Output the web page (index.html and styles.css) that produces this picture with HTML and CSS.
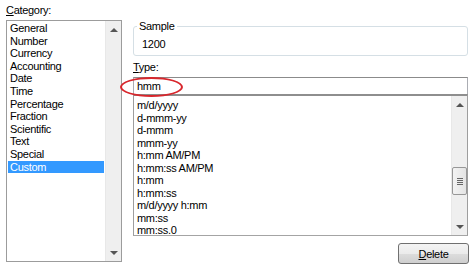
FILE: index.html
```html
<!DOCTYPE html>
<html>

<head>
    <meta name="viewport" content="width=device-width, initial-scale=1.0">
    <title>Format Cells - Custom</title>
    <link rel="stylesheet" href="styles.css">
</head>

<body>
    <div class="dialog">
        <div class="left">
            <div class="caption"><u>C</u>ategory:</div>
            <div class="listbox cat">
                <ul class="items">
                    <li>General</li>
                    <li>Number</li>
                    <li>Currency</li>
                    <li>Accounting</li>
                    <li>Date</li>
                    <li>Time</li>
                    <li>Percentage</li>
                    <li>Fraction</li>
                    <li>Scientific</li>
                    <li>Text</li>
                    <li>Special</li>
                    <li class="sel">Custom</li>
                </ul>
                <div class="vscroll">
                    <div class="arrow"><span class="up"></span></div>
                    <div class="track"></div>
                    <div class="arrow"><span class="down"></span></div>
                </div>
            </div>
        </div>

        <div class="right">
            <fieldset class="sample">
                <legend>Sample</legend>
                <div class="value">1200</div>
            </fieldset>

            <div class="caption type-label"><u>T</u>ype:</div>
            <div class="type-input">
                hmm
                <span class="circle"></span>
            </div>

            <div class="listbox types">
                <ul class="items">
                    <li>m/d/yyyy</li>
                    <li>d-mmm-yy</li>
                    <li>d-mmm</li>
                    <li>mmm-yy</li>
                    <li>h:mm AM/PM</li>
                    <li>h:mm:ss AM/PM</li>
                    <li>h:mm</li>
                    <li>h:mm:ss</li>
                    <li>m/d/yyyy h:mm</li>
                    <li>mm:ss</li>
                    <li>mm:ss.0</li>
                </ul>
                <div class="vscroll">
                    <div class="arrow"><span class="up"></span></div>
                    <div class="track">
                        <div class="thumb"><span></span><span></span><span></span><span></span></div>
                    </div>
                    <div class="arrow"><span class="down"></span></div>
                </div>
            </div>

            <div class="buttons">
                <button class="btn"><u>D</u>elete</button>
            </div>
        </div>
    </div>
</body>

</html>
```

FILE: styles.css
```css
body {
    margin: 0;
    background: #ffffff;
    font-family: "Liberation Sans", Arial, sans-serif;
    font-size: 11px;
    letter-spacing: -0.3px;
    color: #000000;
}

.dialog {
    display: flex;
    gap: 11px;
    padding: 4px 6px 0 6px;
}

.left {
    width: 116px;
}

.right {
    width: 335px;
    padding-top: 16px;
}

.caption {
    height: 16px;
    line-height: 13px;
}

u {
    text-decoration: underline;
}

.listbox {
    display: flex;
    border: 1px solid #a0a0a0;
    background: #ffffff;
}

.cat {
    height: 240px;
    border-color: #9c9c9c;
}

.items {
    list-style: none;
    margin: 0;
    padding: 1px 1px 0 1px;
    flex: 1;
}

.items li {
    height: 12.6px;
    line-height: 12.6px;
    padding-left: 2px;
    white-space: nowrap;
}

.items li.sel {
    background: #3399ff;
    color: #ffffff;
}

.vscroll {
    width: 15px;
    display: flex;
    flex-direction: column;
    background: #efefef;
    border-left: 1px solid #e8e8e8;
}

.arrow {
    height: 17px;
    display: flex;
    align-items: center;
    justify-content: center;
}

.up {
    width: 0;
    height: 0;
    border-left: 4px solid transparent;
    border-right: 4px solid transparent;
    border-bottom: 4px solid #555555;
}

.down {
    width: 0;
    height: 0;
    border-left: 4px solid transparent;
    border-right: 4px solid transparent;
    border-top: 4px solid #555555;
}

.track {
    flex: 1;
}

.thumb {
    margin-top: 54px;
    height: 26px;
    border: 1px solid #979797;
    border-radius: 2px;
    background: linear-gradient(to right, #f3f3f3, #e4e4e4);
    display: flex;
    flex-direction: column;
    align-items: center;
    justify-content: center;
    gap: 1px;
}

.thumb span {
    width: 6px;
    height: 1px;
    background: #666666;
}

.sample {
    margin: 0;
    padding: 5px 8px 4px 8px;
    border: 1px solid #d5dfe5;
    border-radius: 3px;
}

.sample legend {
    padding: 0 2px;
    margin-left: -5px;
    line-height: 13px;
}

.sample .value {
    line-height: 13px;
}

.type-label {
    margin-top: 5px;
}

.type-input {
    position: relative;
    height: 16px;
    line-height: 16px;
    padding-left: 3px;
    border: 1px solid #abadb3;
    border-top-color: #8b8b8b;
    border-bottom: none;
}

.circle {
    position: absolute;
    left: -14px;
    top: -1px;
    width: 59px;
    height: 16px;
    border: 2px solid #d8262c;
    border-radius: 50%;
}

.types {
    height: 139px;
    border-top: 2px solid #8e8e8e;
    border-color: #8e8e8e #9e9e9e #a4a4a4 #9e9e9e;
}

.types .items {
    padding-top: 3px;
}

.types .items li {
    height: 12.5px;
    line-height: 12.5px;
}

.buttons {
    display: flex;
    justify-content: flex-end;
    margin-top: 7px;
}

.btn {
    width: 71px;
    height: 21px;
    margin-right: -1px;
    border: 1px solid #707070;
    border-radius: 3px;
    background: linear-gradient(to bottom, #f4f4f4 0%, #ebebeb 50%, #dddddd 51%, #cfcfcf 100%);
    font-family: "Liberation Sans", Arial, sans-serif;
    font-size: 11px;
    letter-spacing: -0.3px;
    color: #000000;
    padding: 0;
}
```
